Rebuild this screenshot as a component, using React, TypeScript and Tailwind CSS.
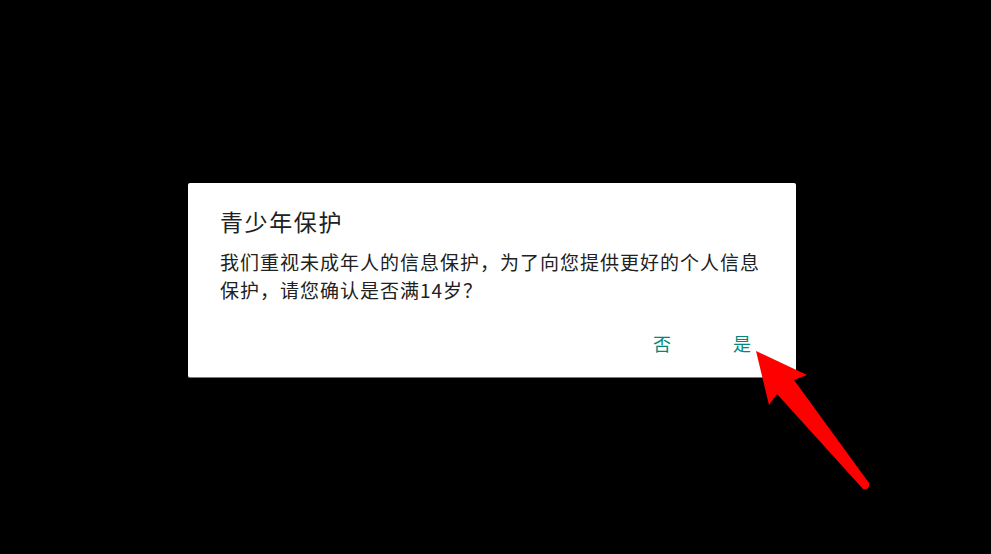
const font = { fontFamily: '"Noto Sans CJK SC", "Noto Sans", sans-serif' };

function Arrow() {
  return (
    <svg
      className="absolute left-0 top-0 pointer-events-none"
      width="991"
      height="554"
      viewBox="0 0 991 554"
    >
      <path
        d="M756 351 L807 375 L794 380 L869 483 Q870 490 863 489 L777 394 L769 405 Z"
        fill="#ff0000"
      />
    </svg>
  );
}

export default function App() {
  return (
    <div className="relative w-[991px] h-[554px] bg-black overflow-hidden" style={font}>
      <div className="ml-[188px] pt-[183px]">
        <div className="w-[608px] h-[195px] bg-white rounded-[2px] border-b border-[#7a7a7a] pl-[32px] pr-[30px] pt-[18px] flex flex-col">
          <h2 className="text-[23px] leading-[40px] tracking-[1.6px] text-[#212121]">青少年保护</h2>
          <p className="mt-[7px] text-[19px] leading-[28px] tracking-[1px] text-[#212121]">
            我们重视未成年人的信息保护，为了向您提供更好的个人信息保护，请您确认是否满14岁？
          </p>
          <div className="mt-auto mb-[22px] flex justify-end gap-[62px] pr-[15px]">
            <button className="text-[18px] leading-[24px] text-[#00897b]">否</button>
            <button className="text-[18px] leading-[24px] text-[#00897b]">是</button>
          </div>
        </div>
      </div>
      <Arrow />
    </div>
  );
}
